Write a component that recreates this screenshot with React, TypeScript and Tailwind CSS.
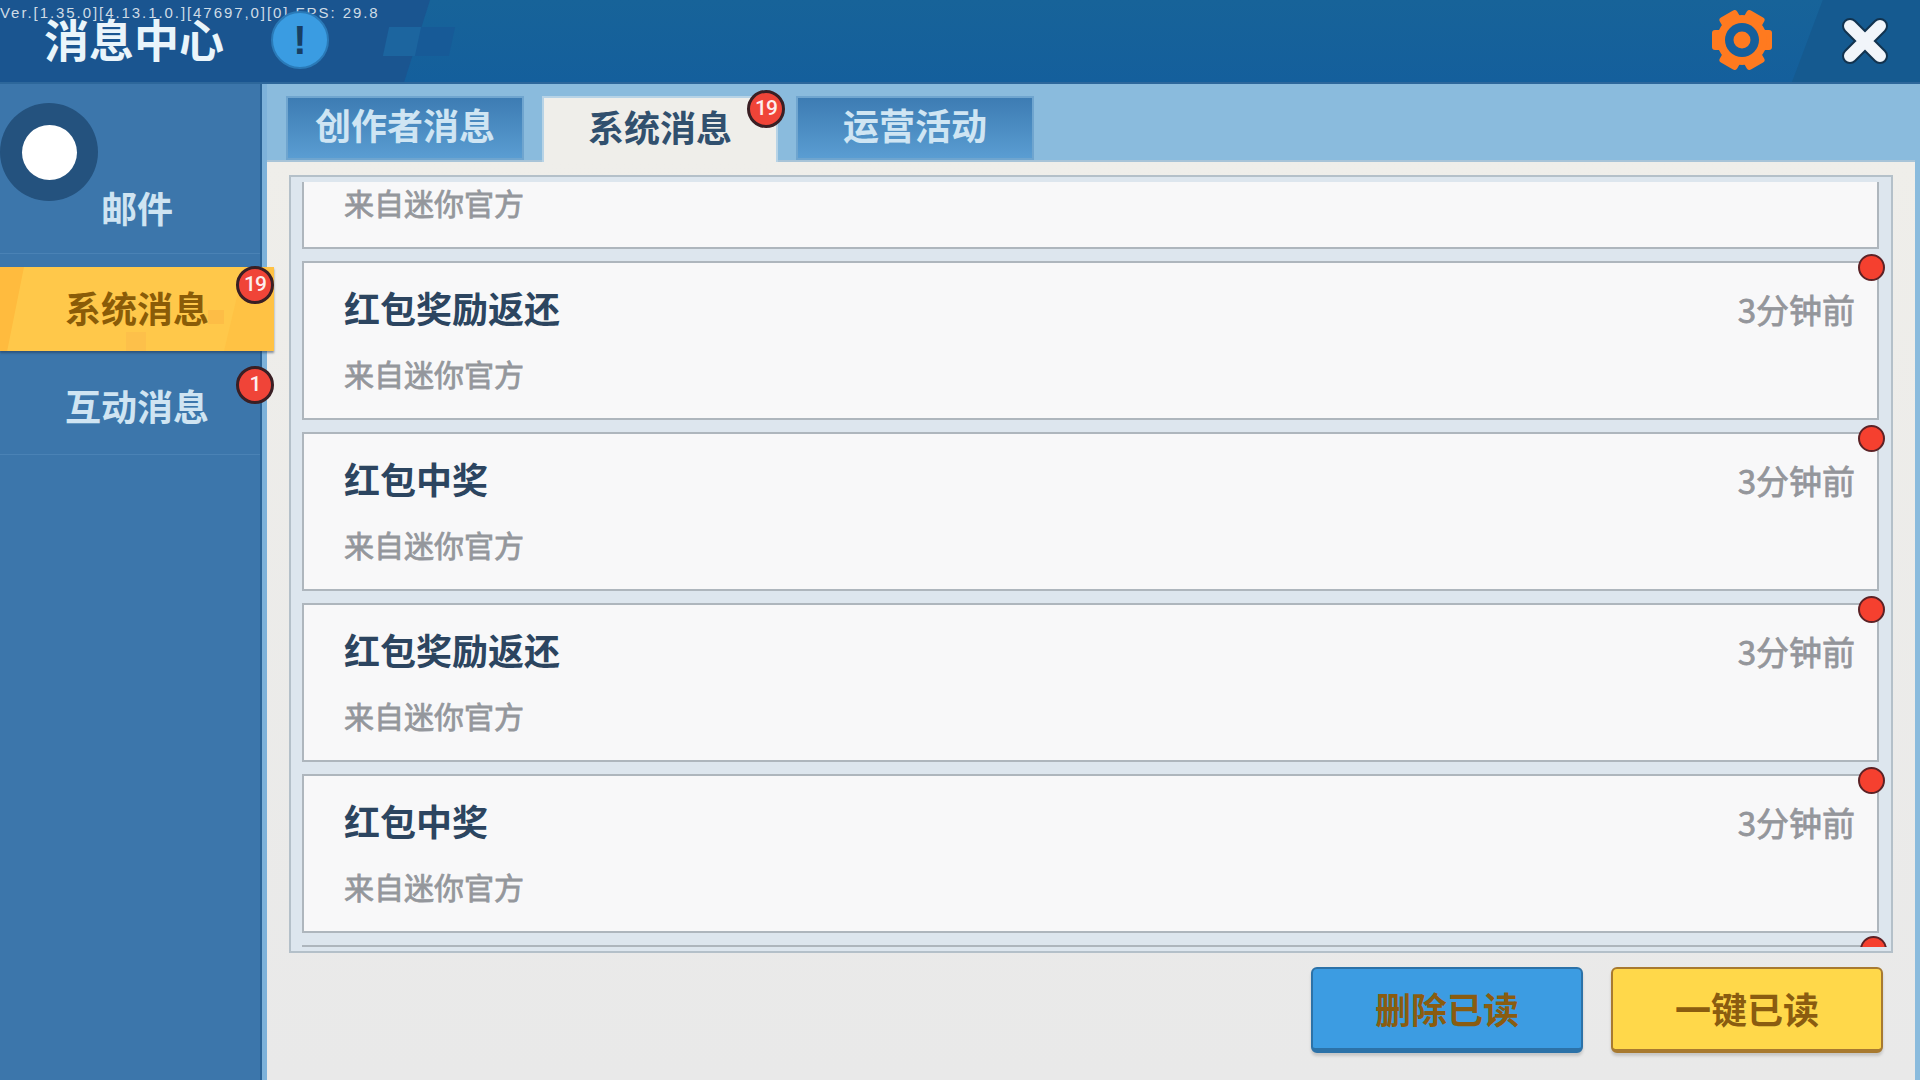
const CJK = "font-['Noto_Sans_CJK_SC','Noto_Sans',sans-serif]";

function Badge({ n, className }: { n: string; className: string }) {
  return (
    <div className={`absolute flex h-[38px] w-[38px] items-center justify-center rounded-full border-[3px] border-[#3a1f24] bg-[#f04438] font-['Roboto',sans-serif] text-[21px] font-medium tracking-[-1px] text-[#fdeeee] ${className}`}>
      {n}
    </div>
  );
}

function Gear() {
  return (
    <svg width="62" height="60" viewBox="-31 -30 62 60" className="absolute left-[1711px] top-[10px]">
      {[0, 60, 120].map((a) => (
        <rect key={a} x="-30" y="-10" width="60" height="20" rx="3" fill="#ff7a1f" transform={`rotate(${a})`} />
      ))}
      <circle r="19" fill="none" stroke="#ff7a1f" strokeWidth="12" />
      <circle r="17" fill="#155f9c" />
      <circle r="8.5" fill="#ff7a1f" />
    </svg>
  );
}

function CloseX() {
  return (
    <svg width="48" height="48" viewBox="0 0 48 48" className="absolute left-[1841px] top-[17px]">
      <path d="M9 9 L39 39 M39 9 L9 39" stroke="#12334f" strokeWidth="16" strokeLinecap="round" />
      <path d="M9 9 L39 39 M39 9 L9 39" stroke="#f1f5fa" strokeWidth="12" strokeLinecap="round" />
    </svg>
  );
}

function Card({ title, clipped }: { title: string; clipped?: boolean }) {
  return (
    <div className="relative mr-[8px] h-[159px] shrink-0 border-2 border-[#aeb6bd] bg-[#f8f8f9] pl-[40px] pr-[22px] pt-[26px]">
      <div className="flex h-[39px] items-start justify-between">
        <div className="text-[36px] font-bold leading-[36px] text-[#2c4560]">{title}</div>
        <div className="mt-[2px] text-[33px] leading-[36px] text-[#94969b] [-webkit-text-stroke:0.8px_#94969b]">3分钟前</div>
      </div>
      <div className="mt-[30px] text-[30px] leading-[30px] text-[#94979c] [-webkit-text-stroke:0.8px_#94979c]">来自迷你官方</div>
      {!clipped && (
        <div className="absolute right-[-8px] top-[-9px] h-[27px] w-[27px] rounded-full border-2 border-[#5c2226] bg-[#f5402f]" />
      )}
    </div>
  );
}

function Tab({ label, active }: { label: string; active?: boolean }) {
  if (active) {
    return (
      <div className="relative z-10 -mb-[2px] flex h-[66px] w-[236px] items-center justify-center border-x-2 border-t-2 border-[#b7d3e6] bg-[#efeeea] pb-[8px] text-[36px] font-bold text-[#31506e]">
        {label}
        <Badge n="19" className="right-[-9px] top-[-8px]" />
      </div>
    );
  }
  return (
    <div className="flex h-[64px] w-[238px] items-center justify-center border-2 border-[#6fa5cf] bg-gradient-to-b from-[#3d7cb3] to-[#5a9dd2] pb-[8px] text-[36px] font-bold text-[#cfe5f3]">
      {label}
    </div>
  );
}

export default function App() {
  const titles = ["红包奖励返还", "红包中奖", "红包奖励返还", "红包中奖"];
  return (
    <div className={`flex h-[1080px] w-[1920px] flex-col overflow-hidden bg-[#8abbdd] ${CJK}`}>
      {/* Header */}
      <header className="relative h-[84px] shrink-0 overflow-hidden border-b-2 border-[#2d679b] bg-gradient-to-b from-[#176399] to-[#145f9c]">
        <div className="absolute inset-y-0 left-0 w-[430px] bg-[#1a5590] [clip-path:polygon(0_0,100%_0,94%_100%,0_100%)]" />
        <div className="absolute left-[386px] top-[27px] h-[29px] w-[34px] -skew-x-12 bg-[#1c659f]" />
        <div className="absolute left-[418px] top-[27px] h-[29px] w-[34px] -skew-x-12 bg-[#175a97]" />
        <div className="absolute inset-y-0 right-0 w-[128px] bg-[#155a90] [clip-path:polygon(24%_0,100%_0,100%_100%,0_100%)]" />
        <div className="absolute left-0 top-[5px] font-['Liberation_Sans',sans-serif] text-[15px] leading-[16px] tracking-[1.93px] text-[#cfdce6]">
          Ver.[1.35.0][4.13.1.0.][47697,0][0] FPS: 29.8
        </div>
        <div className="absolute left-[44px] top-[10px] text-[45px] font-bold leading-[58px] text-[#eaf5fb]">消息中心</div>
        <div className="absolute left-[271px] top-[11px] flex h-[58px] w-[58px] items-center justify-center rounded-full border-2 border-[#2a7ab8] bg-[#3a9ce2] font-['Liberation_Sans',sans-serif] text-[40px] font-bold text-[#173f64]">
          !
        </div>
        <Gear />
        <CloseX />
      </header>

      <div className="flex min-h-0 flex-1">
        {/* Sidebar */}
        <aside className="relative z-20 w-[267px] shrink-0 border-r-[5px] border-[#7db2da]">
          <div className="h-full w-[262px] border-r-2 border-[#2a6396] bg-[#3c76ab]">
            <div className="relative h-[169px] w-[274px] pt-[98px] text-center text-[36px] font-bold leading-[50px] text-[#cfe4f2]">
              <div className="absolute left-0 top-[19px] flex h-[98px] w-[98px] items-center justify-center rounded-full bg-[#24527e]">
                <div className="h-[55px] w-[55px] rounded-full bg-white" />
              </div>
              邮件
            </div>
            <div className="h-px w-[260px] bg-[#4a82b5]" />
            <div className="relative mt-[13px] flex h-[84px] w-[274px] items-center justify-center overflow-visible bg-[#ffc84a] pb-[4px] text-[36px] font-bold text-[#8a5c08] shadow-[0_2px_2px_rgba(30,50,80,0.5)]">
              <div className="absolute inset-y-0 left-0 w-[24px] bg-[#ffbb3e] [clip-path:polygon(0_0,100%_0,30%_100%,0_100%)]" />
              <div className="absolute inset-y-0 right-0 w-[50px] bg-[#ffc244] [clip-path:polygon(40%_0,100%_0,100%_100%,0_100%)]" />
              <div className="absolute left-[208px] top-[43px] h-[14px] w-[16px] bg-[#fdbd46]" />
              <div className="absolute left-[126px] top-[65px] h-[19px] w-[20px] bg-[#fdc04a]" />
              <span className="relative">系统消息</span>
              <Badge n="19" className="right-[0px] top-[-1px]" />
            </div>
            <div className="relative flex h-[103px] w-[274px] items-center justify-center pt-[5px] text-[36px] font-bold text-[#cfe4f2]">
              互动消息
              <Badge n="1" className="right-[0px] top-[15px]" />
            </div>
            <div className="h-px w-[260px] bg-[#4a82b5]" />
          </div>
        </aside>

        {/* Main */}
        <main className="flex min-w-0 flex-1 flex-col">
          <div className="flex h-[76px] shrink-0 items-end gap-[18px] pl-[19px]">
            <Tab label="创作者消息" />
            <Tab label="系统消息" active />
            <Tab label="运营活动" />
          </div>
          <section className="mr-[5px] flex min-h-0 flex-1 flex-col border-t-2 border-[#a8c4d8] bg-gradient-to-b from-[#efeeea] to-[#e9e9e9] px-[22px] pt-[13px]">
            <div className="flex h-[778px] shrink-0 flex-col border-2 border-[#b4c0c9] bg-[#dde6ee] pl-[11px] pr-[4px] pt-[5px]">
              <div className="flex h-[765px] flex-col overflow-hidden">
                <div className="-mt-[92px] flex flex-col gap-[12px]">
                  <Card title="" clipped />
                  {titles.map((t, i) => (
                    <Card key={i} title={t} />
                  ))}
                  <div className="relative mr-[8px] h-[2px] shrink-0 bg-[#aeb6bd]">
                    <div className="absolute right-[-8px] top-[-9px] h-[27px] w-[27px] rounded-full border-2 border-[#5c2226] bg-[#f5402f]" />
                  </div>
                </div>
              </div>
            </div>
            <div className="flex justify-end gap-[28px] pr-[10px] pt-[14px]">
              <div className="flex h-[86px] w-[272px] items-center justify-center rounded-[6px] border-2 border-b-[5px] border-[#2c72a8] bg-[#3c9ce2] pb-[2px] text-[36px] font-bold text-[#8a5c10] shadow-[0_3px_3px_rgba(0,0,0,0.15)]">
                删除已读
              </div>
              <div className="flex h-[86px] w-[272px] items-center justify-center rounded-[6px] border-2 border-b-[4px] border-[#a87a30] bg-[#ffd84a] pb-[2px] text-[36px] font-bold text-[#8a5c10] shadow-[0_3px_3px_rgba(0,0,0,0.15)]">
                一键已读
              </div>
            </div>
          </section>
        </main>
      </div>
    </div>
  );
}
